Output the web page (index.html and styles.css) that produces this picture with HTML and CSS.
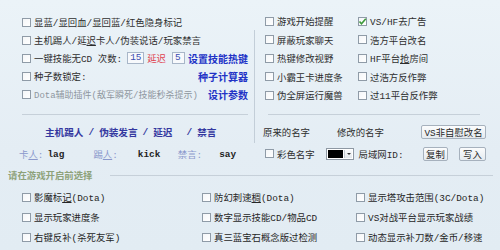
FILE: index.html
```html
<!DOCTYPE html>
<html>
<head>
<meta charset="utf-8">
<link rel="stylesheet" href="styles.css">
</head>
<body>
<div class="app">
  <div class="top">
    <div class="left">
      <div class="row"><span class="cb"></span><span>显蓝/显回血/显回蓝/红色隐身标记</span></div>
      <div class="row"><span class="cb"></span><span>主机踢人/延<u>迟</u>卡人/伪装说话/玩家禁言</span></div>
      <div class="row"><span class="cb"></span><span>一键技能无CD 次数:</span><span class="inp inp1">15</span><span class="red">延迟</span><span class="inp inp2">5</span><span class="link">设置技能热键</span></div>
      <div class="row"><span class="cb"></span><span>种子数锁定:</span><span class="link">种子计算器</span></div>
      <div class="row"><span class="cb"></span><span class="dis">Dota辅助插件(敌军瞬死/技能秒杀提示)</span><span class="link">设计参数</span></div>
      <div class="hr"></div>
      <div class="cmds"><span>主机踢人</span><span class="sl">/</span><span>伪装发言</span><span class="sl">/</span><span>延迟</span><span class="sl sl-wide">/</span><span>禁言</span></div>
      <div class="keys"><span class="lab">卡<u>人</u>:</span><span class="val v1">lag</span><span class="lab">踢<u>人</u>:</span><span class="val v2">kick</span><span class="lab">禁言:</span><span class="val">say</span></div>
    </div>
    <div class="vsep"></div>
    <div class="right">
      <div class="grid2">
        <div class="item"><span class="cb"></span><span>游戏开始提醒</span></div>
        <div class="item"><span class="cb checked"><svg viewBox="0 0 9 9" width="9" height="9"><polyline points="1.5,4.5 3.5,6.8 7.8,1.8" fill="none" stroke="#3c9a3a" stroke-width="1.6"/></svg></span><span>VS/HF去广告</span></div>
        <div class="item"><span class="cb"></span><span>屏蔽玩家聊天</span></div>
        <div class="item"><span class="cb"></span><span>浩方平台改名</span></div>
        <div class="item"><span class="cb"></span><span>热键修改视野</span></div>
        <div class="item"><span class="cb"></span><span>HF平台<u>抢</u>房间</span></div>
        <div class="item"><span class="cb"></span><span>小霸王卡进度条</span></div>
        <div class="item"><span class="cb"></span><span>过浩方反作弊</span></div>
        <div class="item"><span class="cb"></span><span>伪全屏运行魔兽</span></div>
        <div class="item"><span class="cb"></span><span>过11平台反作弊</span></div>
      </div>
      <div class="hr hr-r"></div>
      <div class="names"><span class="n1">原来的名字</span><span class="n2">修改的名字</span><span class="btn btn-wide">VS非自慰改名</span></div>
      <div class="colorrow">
        <span class="cb"></span><span>彩色名字</span>
        <span class="dd"><span class="sw"></span><span class="arr"></span></span>
        <span class="lan">局域网ID:</span>
        <span class="btn b-copy">复制</span>
        <span class="btn b-write">写入</span>
      </div>
    </div>
  </div>
  <div class="bottom">
    <div class="legend"><span class="ltext">请在游戏开启前选择</span><span class="line"></span></div>
    <div class="grid3">
      <div class="item"><span class="cb"></span><span>影魔标<u>记</u>(Dota)</span></div>
      <div class="item"><span class="cb"></span><span>防幻刺速<u>稠</u>(Dota)</span></div>
      <div class="item"><span class="cb"></span><span>显示塔攻击范围(3C/Dota)</span></div>
      <div class="item"><span class="cb"></span><span>显示玩家进度条</span></div>
      <div class="item"><span class="cb"></span><span>数字显示技能CD/物品CD</span></div>
      <div class="item"><span class="cb"></span><span>VS对战平台显示玩家战绩</span></div>
      <div class="item"><span class="cb"></span><span>右键反补(杀死友军)</span></div>
      <div class="item"><span class="cb"></span><span>真三蓝宝石概念版过检测</span></div>
      <div class="item"><span class="cb"></span><span>动态显示补刀数/金币/移速</span></div>
    </div>
  </div>
</div>
</body>
</html>
```

FILE: styles.css
```css
* { box-sizing: border-box; }
html, body { margin: 0; padding: 0; }
body {
  width: 500px;
  height: 250px;
  overflow: hidden;
  background: #e5eef5;
  font-family: "Liberation Mono", "Noto Sans CJK SC", monospace;
  font-size: 9.4px;
  color: #2e2e2e;
}
u { text-decoration: underline; text-underline-offset: 1px; }
.app {
  width: 500px;
  height: 250px;
  background: linear-gradient(180deg, #ebf3f8 0%, #e4edf4 60%, #e2ecf3 100%);
}
.top { display: flex; height: 166px; }
.left { width: 254px; padding: 13px 6px 0 22px; }
.row { display: flex; align-items: center; height: 18px; white-space: nowrap; }
.cb {
  flex: none;
  width: 9px;
  height: 9px;
  border: 1px solid #8f9ba7;
  background: linear-gradient(135deg, #f4f6f8, #ffffff);
  margin-right: 3px;
  display: inline-flex;
  align-items: center;
  justify-content: center;
}
.cb svg { display: block; margin: -1px; }
.link { margin-left: auto; font-weight: bold; color: #2233c6; font-size: 10px; }
.inp {
  height: 12px;
  border: 1px solid #a8b6c8;
  background: #f7f9fc;
  color: #3a4bb0;
  display: inline-flex;
  align-items: center;
  padding-left: 2px;
  line-height: 10px;
}
.inp1 { width: 17px; margin-left: 5px; }
.inp2 { width: 13px; margin-left: 6px; }
.red { color: #e0404e; margin-left: 3px; }
.dis { color: #8e969e; font-size: 9px; }
.hr { height: 1px; background: #c6d0d9; margin-top: 11px; }
.cmds {
  display: flex;
  align-items: center;
  height: 18px;
  margin-top: 8px;
  padding-left: 23px;
  font-weight: bold;
  font-size: 9.6px;
  color: #3438a0;
  white-space: nowrap;
}
.sl { margin: 0 5px; }
.sl-wide { margin-left: 14px; }
.keys {
  display: flex;
  align-items: center;
  height: 18px;
  margin-top: 4px;
  margin-left: -3px;
  white-space: nowrap;
}
.lab { color: #8a98cc; }
.val { font-weight: bold; color: #1e1e1e; margin-left: 4px; }
.v1 { width: 46px; }
.v2 { width: 40px; margin-left: 20px; }
.val:last-child { margin-left: 17px; }
.vsep { flex: none; width: 1px; height: 113px; margin-top: 30px; background: #c3ced8; }
.right { flex: 1; padding: 12px 14px 0 10px; }
.grid2 { display: grid; grid-template-columns: 93px auto; grid-auto-rows: 18.5px; }
.item { display: flex; align-items: center; white-space: nowrap; }
.hr-r { margin: 9px 6px 0 3px; }
.names {
  display: flex;
  align-items: center;
  height: 18px;
  margin-top: 8px;
  margin-left: -2px;
  white-space: nowrap;
}
.n2 { margin-left: 27px; }
.btn {
  display: inline-flex;
  align-items: center;
  justify-content: center;
  height: 14px;
  border: 1px solid #a6b1bd;
  border-radius: 2px;
  background: linear-gradient(180deg, #fbfcfd, #e5eaef);
  color: #2a2a2a;
  white-space: nowrap;
}
.btn-wide { margin-left: auto; width: 65px; }
.colorrow { display: flex; align-items: center; height: 18px; margin-top: 4px; white-space: nowrap; }
.dd {
  display: inline-flex;
  align-items: stretch;
  width: 28px;
  height: 12px;
  margin-left: 11px;
  border: 1px solid #8e98a3;
  background: #fff;
  padding: 1px;
}
.sw { width: 15px; background: #000; }
.arr {
  flex: 1;
  margin-left: 1px;
  border-left: 1px solid #c3c9cf;
  background: linear-gradient(#fafbfc, #e4e8ec);
  position: relative;
}
.arr::after {
  content: "";
  position: absolute;
  left: 2px;
  top: 3px;
  border-left: 2px solid transparent;
  border-right: 2px solid transparent;
  border-top: 2px solid #333;
}
.lan { margin-left: 5px; }
.b-copy { margin-left: auto; width: 25px; }
.b-write { margin-left: 11px; width: 27px; }
.bottom { height: 84px; }
.legend { display: flex; align-items: center; height: 18px; padding-left: 8px; }
.ltext { color: #8ea27a; font-weight: bold; white-space: nowrap; }
.line { flex: 1; height: 1px; background: #c6d0d9; margin: 0 7px 0 18px; }
.grid3 {
  display: grid;
  grid-template-columns: 180px 154px 1fr;
  grid-auto-rows: 20px;
  padding-left: 22px;
  margin-top: 3px;
  color: #262626;
}
```
